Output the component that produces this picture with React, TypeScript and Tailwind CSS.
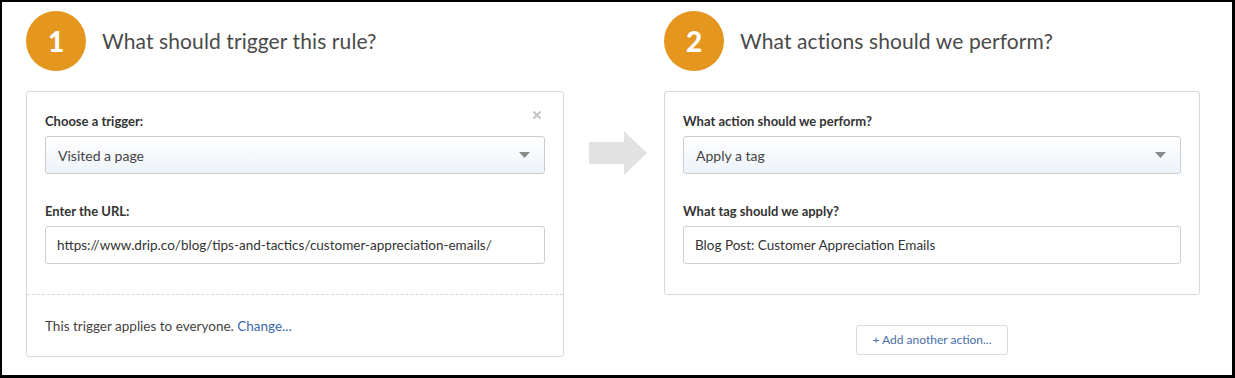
import React from "react";

const font = { fontFamily: "Lato, 'Open Sans', Arial, sans-serif" };

function Step({ n, title }: { n: string; title: string }) {
  return (
    <div className="flex items-center h-[60px]">
      <div className="w-[60px] h-[60px] rounded-full bg-[#e5961f] flex items-center justify-center text-white text-[28px] font-black shrink-0">
        {n}
      </div>
      <h2 className="ml-[16px] text-[21px] text-[#4a4a4a] font-normal tracking-[0.1px]">{title}</h2>
    </div>
  );
}

function Label({ children }: { children: React.ReactNode }) {
  return <div className="text-[13px] font-bold text-[#333] leading-[16px]">{children}</div>;
}

function Select({ value }: { value: string }) {
  return (
    <div className="mt-[7px] h-[38px] rounded-[3px] border border-[#c9cdd2] bg-gradient-to-b from-white to-[#edf3f9] flex items-center justify-between pl-[12px] pr-[14px]">
      <span className="text-[14px] text-[#444]">{value}</span>
      <svg width="11" height="6" viewBox="0 0 11 6">
        <path d="M0 0h11L5.5 6z" fill="#8a8a8a" />
      </svg>
    </div>
  );
}

function Input({ value }: { value: string }) {
  return (
    <div className="mt-[7px] h-[38px] rounded-[3px] border border-[#cfcfcf] bg-white flex items-center px-[11px]">
      <span className="text-[13.5px] text-[#333]">{value}</span>
    </div>
  );
}

export default function App() {
  return (
    <div
      className="w-[1235px] h-[378px] bg-white border-black border-t-2 border-l-2 border-r-[3px] border-b-[3px] pl-[24px] pt-[9px] flex"
      style={font}
    >
      <div className="w-[538px] shrink-0">
        <Step n="1" title="What should trigger this rule?" />
        <div className="mt-[20px] border border-[#d8d8d8] rounded-[3px] relative">
          <svg
            className="absolute right-[21px] top-[18px]"
            width="10"
            height="10"
            viewBox="0 0 10 10"
          >
            <path d="M1.5 1.5l7 7M8.5 1.5l-7 7" stroke="#c6c6c6" strokeWidth="2.2" />
          </svg>
          <div className="px-[18px] pt-[21px] pb-[30px]">
            <Label>Choose a trigger:</Label>
            <Select value="Visited a page" />
            <div className="mt-[29px]">
              <Label>Enter the URL:</Label>
            </div>
            <Input value="https://www.drip.co/blog/tips-and-tactics/customer-appreciation-emails/" />
          </div>
          <div className="border-t border-dashed border-[#d8d8d8] px-[18px] pt-[21px] pb-[20px] text-[13.5px] text-[#444]">
            This trigger applies to everyone. <span className="text-[#3b6aa8]">Change...</span>
          </div>
        </div>
      </div>

      <div className="w-[100px] shrink-0 flex justify-start pl-[25px] pt-[120px]">
        <svg width="58" height="44" viewBox="0 0 58 44">
          <path d="M0 11h35V0l23 22-23 22V33H0z" fill="#e2e2e2" />
        </svg>
      </div>

      <div className="w-[536px] shrink-0">
        <Step n="2" title="What actions should we perform?" />
        <div className="mt-[20px] border border-[#d8d8d8] rounded-[3px] px-[18px] pt-[21px] pb-[30px]">
          <Label>What action should we perform?</Label>
          <Select value="Apply a tag" />
          <div className="mt-[29px]">
            <Label>What tag should we apply?</Label>
          </div>
          <Input value="Blog Post: Customer Appreciation Emails" />
        </div>
        <div className="flex justify-center mt-[30px]">
          <button className="h-[30px] px-[15px] border border-[#dcdcdc] rounded-[3px] text-[12px] text-[#4a6ea8] bg-white">
            + Add another action...
          </button>
        </div>
      </div>
    </div>
  );
}
